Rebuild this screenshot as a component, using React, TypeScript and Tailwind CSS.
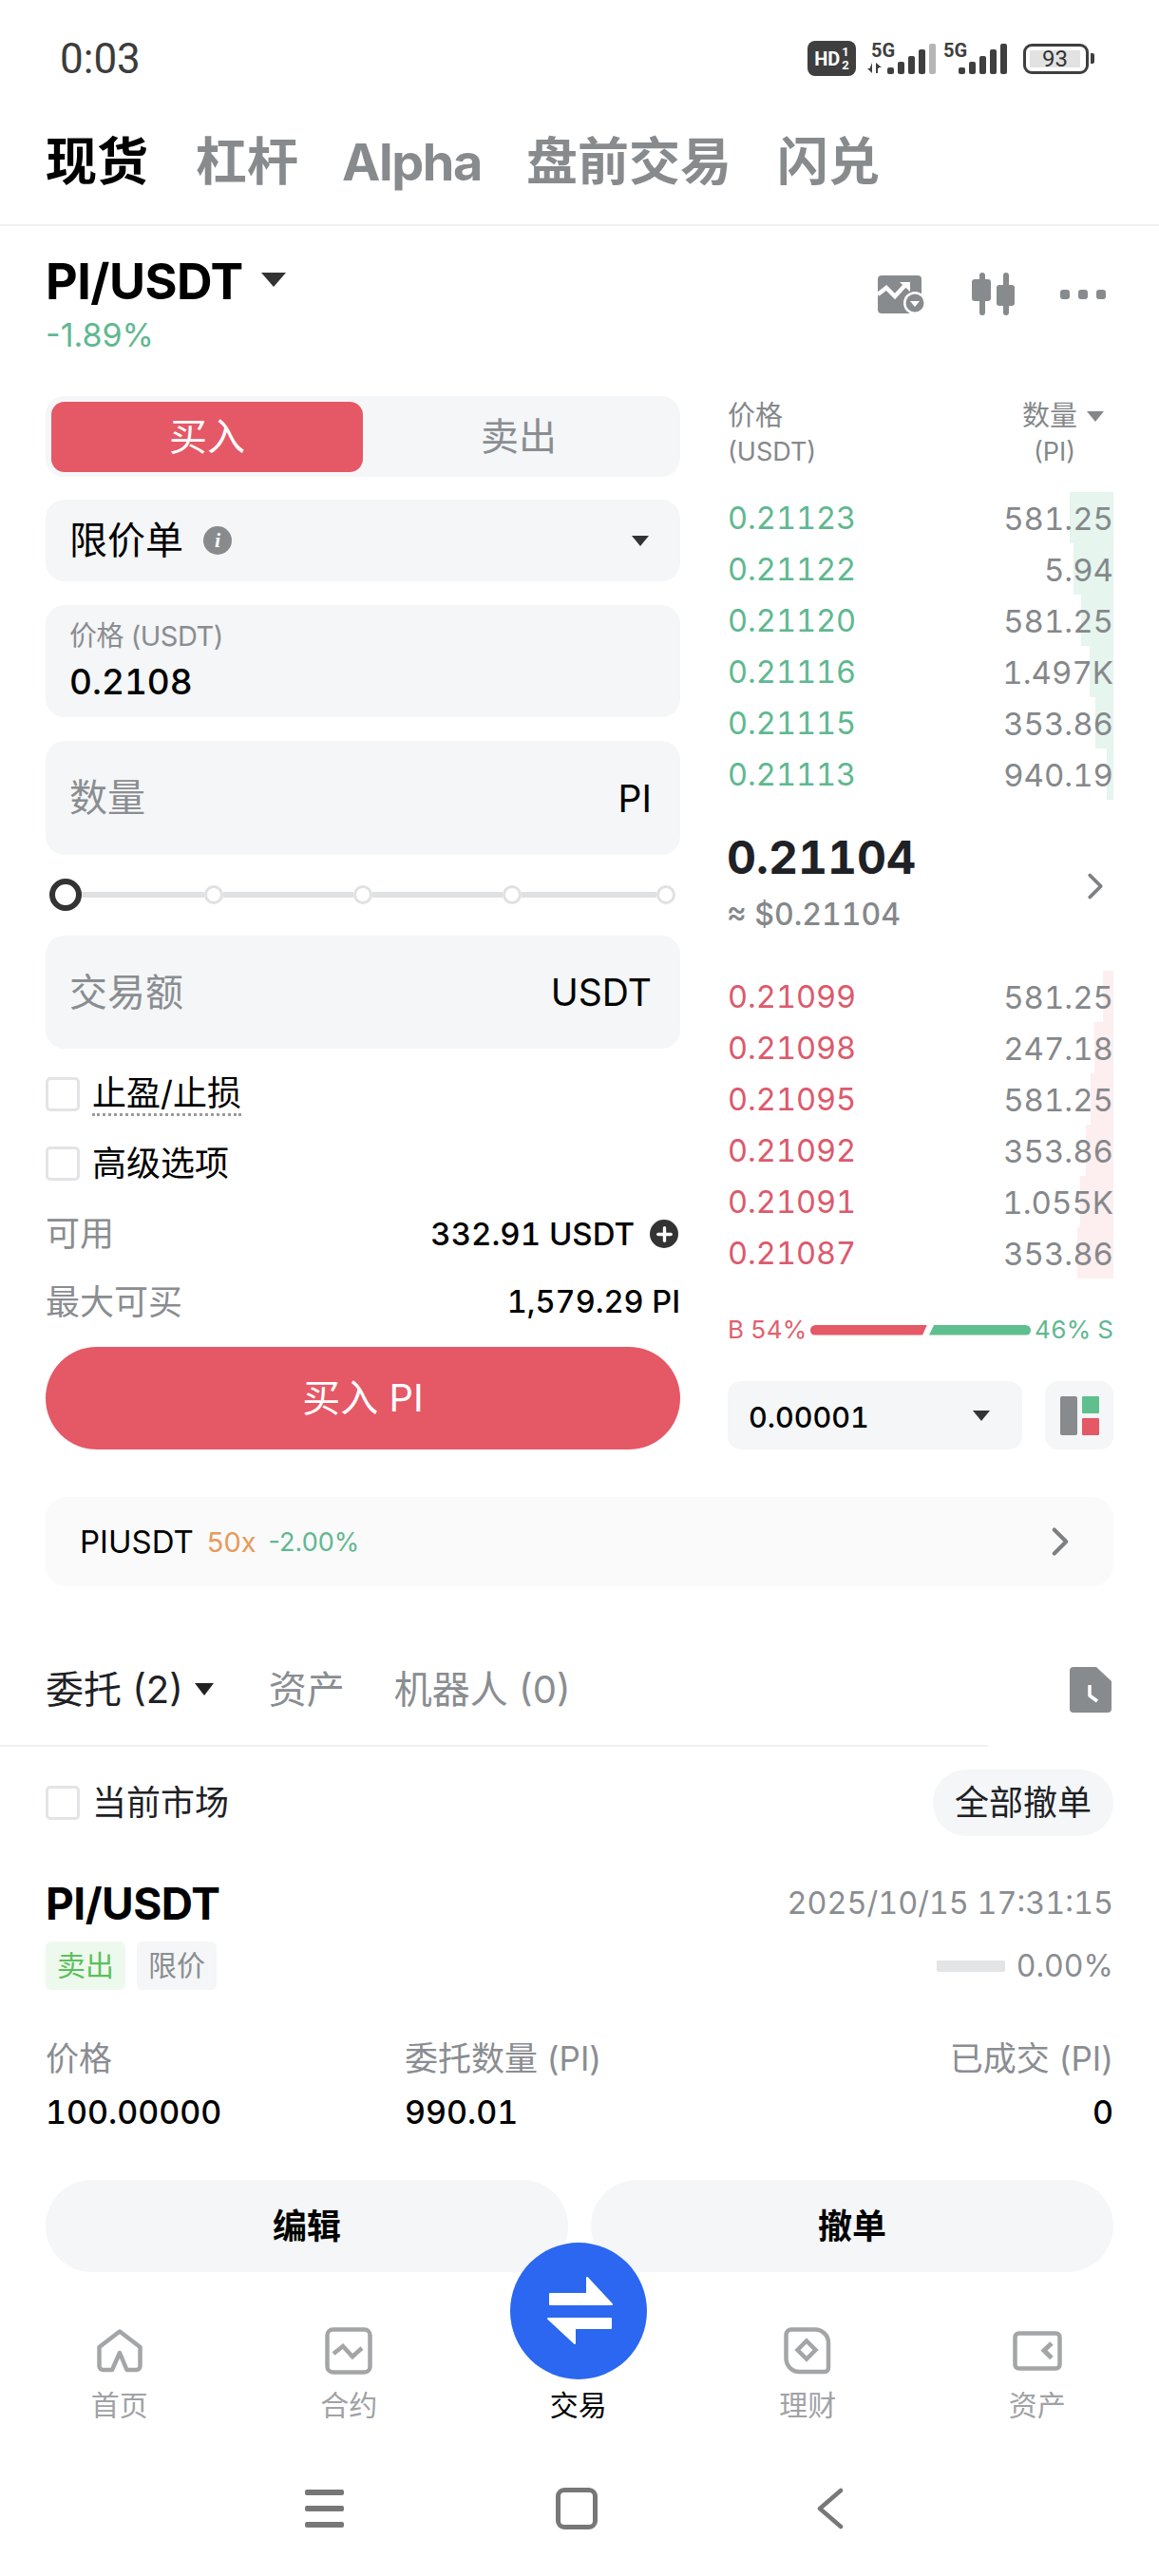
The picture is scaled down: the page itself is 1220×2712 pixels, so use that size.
import { ChevronRight, Plus } from "lucide-react";
import type { ReactNode } from "react";

const asks = [
  { price: "0.21123", qty: "581.25", bar: 46 },
  { price: "0.21122", qty: "5.94", bar: 42 },
  { price: "0.21120", qty: "581.25", bar: 34 },
  { price: "0.21116", qty: "1.497K", bar: 25 },
  { price: "0.21115", qty: "353.86", bar: 19 },
  { price: "0.21113", qty: "940.19", bar: 7 },
];

const bids = [
  { price: "0.21099", qty: "581.25", bar: 11 },
  { price: "0.21098", qty: "247.18", bar: 20 },
  { price: "0.21095", qty: "581.25", bar: 24 },
  { price: "0.21092", qty: "353.86", bar: 29 },
  { price: "0.21091", qty: "1.055K", bar: 35 },
  { price: "0.21087", qty: "353.86", bar: 38 },
];

function Triangle({ className }: { className: string }) {
  return <span className={`block h-0 w-0 border-x-[9px] border-t-[11px] border-x-transparent ${className}`} />;
}

function Bars({ faded }: { faded?: boolean }) {
  const heights = [7, 13, 19, 26, 32];
  return (
    <svg width="51" height="32" viewBox="0 0 51 32">
      {heights.map((h, i) => (
        <rect
          key={h}
          x={i * 11}
          y={32 - h}
          width="7"
          height={h}
          rx="2"
          fill={faded && i === 4 ? "#b5b5b5" : "#3f3f3f"}
        />
      ))}
    </svg>
  );
}

function StatusBar() {
  return (
    <div className="flex h-[124px] items-center justify-between pb-[1px] pl-[63px] pr-[68px]">
      <span className="font-['Roboto',sans-serif] text-[44px] leading-none text-[#3c3c3c]">0:03</span>
      <div className="flex items-center font-['Roboto',sans-serif]">
        <div className="flex h-[37px] w-[51px] items-center justify-center gap-[2px] rounded-[8px] bg-[#3f3f3f] text-white">
          <span className="text-[20px] font-bold leading-none">HD</span>
          <span className="flex flex-col text-[13px] font-bold leading-[14px]">
            <span>1</span>
            <span>2</span>
          </span>
        </div>
        <div className="relative ml-[12px] flex h-[37px] w-[72px] items-end justify-end pb-[2px]">
          <span className="absolute left-[4px] top-0 text-[20px] font-bold leading-none text-[#3f3f3f]">5G</span>
          <svg className="absolute bottom-[3px] left-0" width="16" height="11" viewBox="0 0 16 11" fill="#3f3f3f">
            <path d="M5 0v11L0 6h2.500zM9 0l6 5h-3v1l-3 0z" />
            <path d="M9 6h2v5H9z" />
          </svg>
          <Bars faded />
        </div>
        <div className="relative ml-[8px] flex h-[37px] w-[67px] items-end justify-end pb-[2px]">
          <span className="absolute left-0 top-0 text-[20px] font-bold leading-none text-[#3f3f3f]">5G</span>
          <Bars />
        </div>
        <div className="ml-[17px] flex h-[32px] w-[69px] items-center rounded-[9px] border-[3px] border-[#3f3f3f] p-[4px]">
          <span className="flex h-full w-[53px] items-center justify-center bg-[#e2e2e2] text-[24px] leading-none text-[#333]">
            93
          </span>
        </div>
        <span className="ml-[2px] h-[11px] w-[4px] rounded-r-[2px] bg-[#3f3f3f]" />
      </div>
    </div>
  );
}

function TopTabs() {
  return (
    <div className="flex h-[114px] items-start border-b-2 border-[#f0f0f0] pl-[48px] pt-[20px] text-[54px] font-bold leading-[54px] text-[#888b8e]">
      <span className="text-black">现货</span>
      <span className="ml-[50px]">杠杆</span>
      <span className="ml-[46px] tracking-[-1.4px]">Alpha</span>
      <span className="ml-[47px]">盘前交易</span>
      <span className="ml-[48px]">闪兑</span>
    </div>
  );
}

function PairHeader() {
  return (
    <div className="flex h-[179px] justify-between pl-[48px] pr-[56px]">
      <div>
        <div className="mt-[33px] flex h-[52px] items-center">
          <span className="text-[52px] font-bold leading-[52px] tracking-[-0.5px] text-black">PI/USDT</span>
          <Triangle className="mb-[6px] ml-[19px] border-x-[13px] border-t-[15px] border-t-[#333]" />
        </div>
        <div className="mt-[12px] text-[34px] leading-[36px] text-[#5fb890]">-1.89%</div>
      </div>
      <div className="mt-[49px] flex h-[45px] items-center">
        <svg width="51" height="42" viewBox="0 0 51 42">
          <rect x="0" y="1" width="46" height="40" rx="4" fill="#888b8e" />
          <path d="M0 21l9-7 9 9 11-12" fill="none" stroke="#fff" strokeWidth="4.5" />
          <path d="M23 8h11v10z" fill="#fff" />
          <circle cx="39" cy="30" r="12" fill="#fff" />
          <circle cx="39" cy="30" r="9.500" fill="#888b8e" />
          <path d="M34 28h10l-5 6z" fill="#fff" />
        </svg>
        <svg className="ml-[48px]" width="45" height="45" viewBox="0 0 45 45" fill="#888b8e">
          <rect x="0" y="7" width="20" height="23" rx="3" />
          <rect x="8" y="0" width="6" height="45" rx="3" />
          <rect x="26" y="13" width="19" height="22" rx="3" />
          <rect x="33" y="0" width="6" height="45" rx="3" />
        </svg>
        <div className="ml-[48px] flex gap-[9px]">
          <span className="h-[10px] w-[10px] rounded-[3px] bg-[#888b8e]" />
          <span className="h-[10px] w-[10px] rounded-[3px] bg-[#888b8e]" />
          <span className="h-[10px] w-[10px] rounded-[3px] bg-[#888b8e]" />
        </div>
      </div>
    </div>
  );
}

function Field({ label, unit, className }: { label: string; unit: string; className: string }) {
  return (
    <div className={`flex items-center justify-between rounded-[20px] bg-[#f4f6f7] pl-[25px] pr-[30px] ${className}`}>
      <span className="text-[40px] leading-none text-[#8a8d91]">{label}</span>
      <span className="text-[39px] leading-none text-black">{unit}</span>
    </div>
  );
}

function Check() {
  return <span className="block h-[36px] w-[36px] rounded-[5px] border-[3px] border-[#e3e4e6] bg-white" />;
}

function OrderForm() {
  return (
    <div className="flex w-[668px] flex-col">
      <div className="flex h-[85px] rounded-[20px] bg-[#f4f6f7] p-[6px] pb-[5px] text-[40px]">
        <div className="flex w-[328px] items-center justify-center rounded-[14px] bg-[#e55866] text-white">买入</div>
        <div className="flex flex-1 items-center justify-center text-[#8a8d91]">卖出</div>
      </div>
      <div className="mt-[24px] flex h-[86px] items-center rounded-[20px] bg-[#f4f6f7] pl-[25px] pr-[33px]">
        <span className="text-[40px] leading-none text-black">限价单</span>
        <span className="ml-[21px] flex h-[30px] w-[30px] items-center justify-center rounded-full bg-[#888b8e] font-['Liberation_Serif',serif] text-[22px] font-bold italic leading-none text-white">
          i
        </span>
        <Triangle className="ml-auto border-t-[#333]" />
      </div>
      <div className="mt-[25px] h-[118px] rounded-[20px] bg-[#f4f6f7] pl-[25px] pt-[17px]">
        <div className="text-[29px] leading-[32px] tracking-[-0.5px] text-[#8a8d91]">价格 (USDT)</div>
        <div className="mt-[12px] text-[37px] font-medium leading-[40px] tabular-nums text-black">0.2108</div>
      </div>
      <Field label="数量" unit="PI" className="mt-[25px] h-[120px]" />
      <div className="mt-[25px] flex h-[34px] items-center pl-[4px]">
        <span className="h-[34px] w-[34px] rounded-full border-[6px] border-[#333] bg-white" />
        <span className="h-[6px] w-[129px] bg-[#dfe1e2]" />
        <span className="h-[20px] w-[20px] rounded-full border-[3px] border-[#dfe1e2] bg-white" />
        <span className="h-[6px] w-[137px] bg-[#dfe1e2]" />
        <span className="h-[20px] w-[20px] rounded-full border-[3px] border-[#dfe1e2] bg-white" />
        <span className="h-[6px] w-[137px] bg-[#dfe1e2]" />
        <span className="h-[20px] w-[20px] rounded-full border-[3px] border-[#dfe1e2] bg-white" />
        <span className="h-[6px] w-[142px] bg-[#dfe1e2]" />
        <span className="h-[20px] w-[20px] rounded-full border-[3px] border-[#dfe1e2] bg-white" />
      </div>
      <Field label="交易额" unit="USDT" className="mt-[26px] h-[119px]" />
      <div className="mt-[30px] flex h-[36px] items-center gap-[13px] text-[36px] text-black">
        <Check />
        <span className="mt-[2px] border-b-[3px] border-dotted border-[#9a9a9a] leading-[41px]">止盈/止损</span>
      </div>
      <div className="mt-[37px] flex h-[36px] items-center gap-[13px] text-[36px] text-black">
        <Check />
        <span>高级选项</span>
      </div>
      <div className="mt-[35px] flex h-[42px] items-center justify-between">
        <span className="text-[36px] leading-none text-[#8a8d91]">可用</span>
        <div className="flex items-center gap-[16px] pr-[2px]">
          <span className="text-[33px] font-medium leading-none tabular-nums text-black">332.91 USDT</span>
          <span className="flex h-[30px] w-[30px] items-center justify-center rounded-full bg-[#333]">
            <Plus size={23} color="#fff" strokeWidth={3.5} />
          </span>
        </div>
      </div>
      <div className="mt-[30px] flex h-[42px] items-center justify-between">
        <span className="text-[36px] leading-none text-[#8a8d91]">最大可买</span>
        <span className="text-[32.5px] font-medium leading-none tabular-nums text-black">1,579.29 PI</span>
      </div>
      <div className="mt-[26px] flex h-[108px] items-center justify-center rounded-full bg-[#e55866] text-[40px] text-white">
        买入 PI
      </div>
    </div>
  );
}

function BookRow({
  price,
  qty,
  bar,
  priceColor,
  barColor,
}: {
  price: string;
  qty: string;
  bar: number;
  priceColor: string;
  barColor: string;
}) {
  return (
    <div className="relative flex h-[54px] items-center justify-between text-[33px] leading-none tabular-nums">
      <span className={`absolute inset-y-0 right-0 ${barColor}`} style={{ width: bar }} />
      <span className={`relative pt-[2px] text-[32.5px] ${priceColor}`}>{price}</span>
      <span className="relative pt-[2px] text-[#85888b]">{qty}</span>
    </div>
  );
}

function OrderBook() {
  return (
    <div className="flex w-[406px] flex-col">
      <div className="flex h-[101px] justify-between pt-[2px] text-[29px] leading-[38px] text-[#85888b]">
        <div>
          <div>价格</div>
          <div className="text-[27px]">(USDT)</div>
        </div>
        <div className="pr-[10px] text-center">
          <div className="flex items-center">
            数量
            <Triangle className="ml-[10px] border-t-[#85888b]" />
          </div>
          <div className="pr-[18px] text-[27px]">(PI)</div>
        </div>
      </div>
      {asks.map((row) => (
        <BookRow key={row.price} {...row} priceColor="text-[#5fb890]" barColor="bg-[#e6f5ee]" />
      ))}
      <div className="flex h-[180px] items-center justify-between">
        <div className="mb-[8px] ml-[-1px]">
          <div className="text-[48px] font-bold leading-[60px] tabular-nums text-[#1e2125]">0.21104</div>
          <div className="mt-[10px] text-[32px] font-medium leading-[40px] tabular-nums text-[#85888b]">≈ $0.21104</div>
        </div>
        <ChevronRight size={46} color="#7d8083" strokeWidth={2} className="mr-[-4px] mt-[2px]" />
      </div>
      {bids.map((row) => (
        <BookRow key={row.price} {...row} priceColor="text-[#dc5a6c]" barColor="bg-[#fdeeef]" />
      ))}
      <div className="mt-[35px] flex h-[38px] items-center whitespace-nowrap text-[26px] leading-none tabular-nums">
        <span className="w-[81px] text-[#e0606e]">B 54%</span>
        <span className="ml-[6px] h-[11px] w-[123px] rounded-l-full bg-[#e55866] [clip-path:polygon(0_0,100%_0,96%_100%,0_100%)]" />
        <span className="ml-[2px] h-[11px] w-[107px] rounded-r-full bg-[#5fbf8f] [clip-path:polygon(5%_0,100%_0,100%_100%,0_100%)]" />
        <span className="ml-auto text-[#5fb890]">46% S</span>
      </div>
      <div className="mt-[35px] flex h-[72px] justify-between">
        <div className="flex w-[310px] items-center justify-between rounded-[14px] bg-[#f4f6f7] pl-[22px] pr-[34px]">
          <span className="mt-[4px] text-[30.5px] font-medium leading-none tabular-nums text-black">0.00001</span>
          <Triangle className="border-t-[#333]" />
        </div>
        <div className="flex w-[72px] items-center justify-center gap-[5px] rounded-[14px] bg-[#f4f6f7]">
          <span className="h-[41px] w-[18px] rounded-[2px] bg-[#888b8e]" />
          <span className="flex flex-col gap-[5px]">
            <span className="h-[18px] w-[18px] rounded-[1px] bg-[#5fbf8f]" />
            <span className="h-[18px] w-[18px] rounded-[1px] bg-[#e55866]" />
          </span>
        </div>
      </div>
    </div>
  );
}

function PerpRow() {
  return (
    <div className="ml-[48px] mt-[50px] flex h-[94px] w-[1124px] items-center rounded-[22px] bg-[#fafafa] pl-[36px] pr-[31px]">
      <span className="text-[33px] leading-none text-black">PIUSDT</span>
      <span className="ml-[14px] text-[29px] leading-none text-[#e89a5c]">50x</span>
      <span className="ml-[13px] text-[27px] leading-none text-[#5fb890]">-2.00%</span>
      <ChevronRight size={50} color="#7d8083" strokeWidth={2} className="ml-auto" />
    </div>
  );
}

function OrdersSection() {
  return (
    <div>
      <div className="flex h-[167px] items-center pl-[48px] pr-[50px] pt-[50px]">
        <span className="text-[40px] leading-none text-[#1e2125]">委托 (2)</span>
        <Triangle className="ml-[12px] border-x-[10px] border-t-[13px] border-t-[#222]" />
        <span className="ml-[58px] text-[40px] leading-none text-[#8a8d91]">资产</span>
        <span className="ml-[52px] text-[40px] leading-none text-[#8a8d91]">机器人 (0)</span>
        <svg className="ml-auto" width="44" height="48" viewBox="0 0 44 48">
          <path d="M4 0h24l16 15v29a4 4 0 0 1-4 4H4a4 4 0 0 1-4-4V4a4 4 0 0 1 4-4z" fill="#888b8e" />
          <path d="M21 19v11l8 6" fill="none" stroke="#fff" strokeWidth="3.5" />
        </svg>
      </div>
      <div className="h-[2px] w-[1040px] bg-[#f0f0f0]" />
      <div className="mt-[24px] flex h-[70px] items-center justify-between px-[48px]">
        <div className="flex items-center gap-[13px] text-[36px] text-[#1e2125]">
          <Check />
          <span>当前市场</span>
        </div>
        <div className="flex h-[70px] w-[190px] items-center justify-center rounded-full bg-[#f4f6f7] text-[36px] text-[#1e2125]">
          全部撤单
        </div>
      </div>
      <div className="mt-[50px] flex h-[42px] items-center justify-between px-[48px]">
        <span className="text-[46px] font-bold leading-none tracking-[-0.5px] text-black">PI/USDT</span>
        <span className="text-[32.4px] leading-none tabular-nums text-[#8a8d91]">2025/10/15 17:31:15</span>
      </div>
      <div className="mt-[19px] flex h-[51px] items-center justify-between px-[48px]">
        <div className="flex gap-[12px] text-[30px]">
          <span className="flex h-[51px] w-[84px] items-center justify-center rounded-[6px] bg-[#edf9ed] text-[#5cbf5c]">卖出</span>
          <span className="flex h-[51px] w-[84px] items-center justify-center rounded-[6px] bg-[#f4f6f7] text-[#8a8d91]">限价</span>
        </div>
        <div className="flex items-center gap-[12px]">
          <span className="h-[12px] w-[72px] rounded-[2px] bg-[#e3e4e6]" />
          <span className="text-[32px] leading-none tabular-nums text-[#8a8d91]">0.00%</span>
        </div>
      </div>
      <div className="mt-[47px] grid grid-cols-[378px_1fr_auto] px-[48px] text-[35px] leading-[50px]">
        <span className="text-[#8a8d91]">价格</span>
        <span className="text-[#8a8d91]">委托数量 (PI)</span>
        <span className="text-right text-[#8a8d91]">已成交 (PI)</span>
        <span className="mt-[7px] text-[34px] font-medium tabular-nums text-black">100.00000</span>
        <span className="mt-[7px] text-[34px] font-medium tabular-nums text-black">990.01</span>
        <span className="mt-[7px] text-right text-[34px] font-medium tabular-nums text-black">0</span>
      </div>
      <div className="mt-[46px] flex gap-[24px] px-[48px]">
        <div className="flex h-[97px] flex-1 items-center justify-center rounded-full bg-[#f4f6f7] text-[36px] font-bold text-black">编辑</div>
        <div className="flex h-[97px] flex-1 items-center justify-center rounded-full bg-[#f4f6f7] text-[36px] font-bold text-black">撤单</div>
      </div>
    </div>
  );
}

function HomeIcon() {
  return (
    <svg width="48" height="46" viewBox="0 0 48 46" fill="none" stroke="#a3a5a7" strokeWidth="4.5" strokeLinejoin="round">
      <path d="M24 2.500L2.500 19v20a4 4 0 0 0 4 4H16l8-18 7.500 18h10a4 4 0 0 0 4-4V19z" />
    </svg>
  );
}

function FuturesIcon() {
  return (
    <svg width="50" height="50" viewBox="0 0 50 50" fill="none" stroke="#a3a5a7" strokeWidth="4.500">
      <rect x="2.500" y="2.500" width="45" height="45" rx="6" />
      <path d="M9 28l10-8 10 11 10-9" strokeWidth="4.500" />
    </svg>
  );
}

function EarnIcon() {
  return (
    <svg width="50" height="50" viewBox="0 0 50 50" fill="none" stroke="#a3a5a7" strokeWidth="4.500">
      <path d="M8 2.500h25a14 14 0 0 1 14 14V43a4 4 0 0 1-4 4H17A14 14 0 0 1 2.500 33V8A5.500 5.500 0 0 1 8 2.500z" />
      <path d="M24 14.500l9.500 9.500-9.500 9.500-9.500-9.500z" />
    </svg>
  );
}

function AssetsIcon() {
  return (
    <svg width="52" height="42" viewBox="0 0 52 42" fill="none" stroke="#a3a5a7" strokeWidth="4.500">
      <rect x="2.500" y="2.500" width="47" height="37" rx="4" />
      <path d="M41 13l-8 7.500 8 8" strokeWidth="5" />
    </svg>
  );
}

function NavItem({ label, children }: { label: string; children: ReactNode }) {
  return (
    <div className="flex w-[241.5px] flex-col items-center">
      <div className="flex h-[50px] items-center">{children}</div>
      <span className="mt-[14px] text-[30px] leading-[36px] text-[#a0a2a5]">{label}</span>
    </div>
  );
}

function BottomNav() {
  return (
    <div className="relative mt-[58px] flex pl-[5px]">
      <NavItem label="首页">
        <HomeIcon />
      </NavItem>
      <NavItem label="合约">
        <FuturesIcon />
      </NavItem>
      <div className="flex w-[241.5px] flex-col items-center">
        <div className="h-[50px]" />
        <span className="mt-[14px] text-[30px] leading-[36px] text-black">交易</span>
      </div>
      <NavItem label="理财">
        <EarnIcon />
      </NavItem>
      <NavItem label="资产">
        <AssetsIcon />
      </NavItem>
      <div className="absolute left-[537px] top-[-89px] h-[144px] w-[144px] rounded-full bg-[#2b67f0]">
        <svg width="144" height="144" viewBox="0 0 144 144" fill="#fff" stroke="#fff" strokeWidth="2" strokeLinejoin="round">
          <path d="M42 54h39V37l26 28H42z" />
          <path d="M40 80h66v10H68v16z" />
        </svg>
      </div>
    </div>
  );
}

function SystemNav() {
  return (
    <div className="mt-[69px] flex items-center pl-[321px]">
      <div className="flex h-[40px] w-[41px] flex-col justify-between">
        <span className="h-[6px] rounded-[2px] bg-[#777]" />
        <span className="h-[6px] rounded-[2px] bg-[#777]" />
        <span className="h-[6px] rounded-[2px] bg-[#777]" />
      </div>
      <span className="ml-[223px] h-[44px] w-[44px] rounded-[9px] border-[5px] border-[#777]" />
      <svg className="ml-[231px]" width="28" height="44" viewBox="0 0 28 44" fill="none" stroke="#777" strokeWidth="4.5" strokeLinecap="round" strokeLinejoin="round">
        <path d="M25 3L3 22l22 19" />
      </svg>
    </div>
  );
}

export default function App() {
  return (
    <div className="h-[2712px] w-[1220px] overflow-hidden bg-white font-['Inter','Noto_Sans_CJK_SC',sans-serif]">
      <StatusBar />
      <TopTabs />
      <PairHeader />
      <div className="flex gap-[50px] pl-[48px]">
        <OrderForm />
        <OrderBook />
      </div>
      <PerpRow />
      <OrdersSection />
      <BottomNav />
      <SystemNav />
    </div>
  );
}
